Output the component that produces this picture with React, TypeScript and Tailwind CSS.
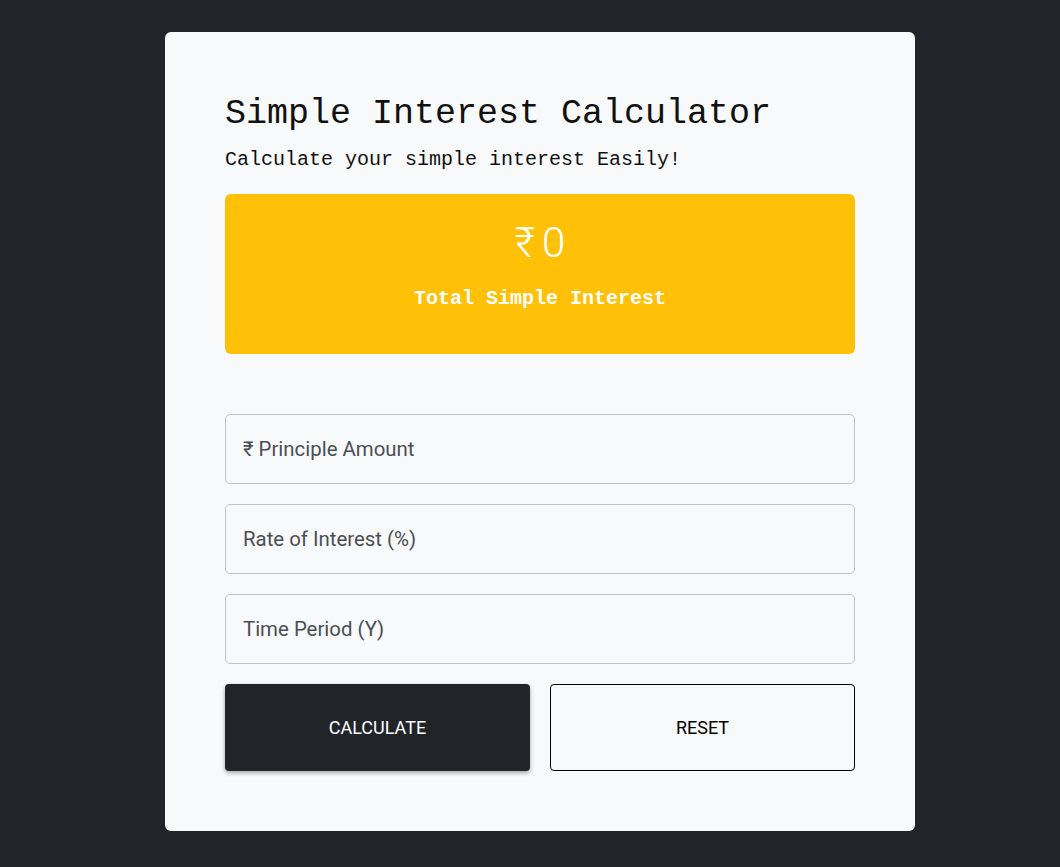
import React from "react";

export default function App() {
  return (
    <div className="min-h-[867px] w-full bg-[#212529] flex justify-center pt-[32px] pl-[20px]" style={{ fontFamily: "Roboto, 'Noto Sans', sans-serif" }}>
      <div className="w-[750px] h-[799px] bg-[#f8f9fa] rounded-[6px] px-[60px] pt-[62px]">
        <h1 className="text-[35px] leading-[40px] text-[#111] " style={{ fontFamily: "'Liberation Mono', 'Courier New', monospace" }}>
          Simple Interest Calculator
        </h1>
        <p className="text-[20px] leading-[24px] text-[#111] mt-[14px]" style={{ fontFamily: "'Liberation Mono', 'Courier New', monospace" }}>
          Calculate your simple interest Easily!
        </p>
        <div className="mt-[22px] h-[160px] bg-[#ffc107] rounded-[6px] flex flex-col items-center pt-[25px]">
          <div className="text-[42px] leading-[48px] font-light tracking-[7px] pl-[7px] text-white">₹0</div>
          <div className="mt-[20px] text-[20px] leading-[24px] font-bold text-white" style={{ fontFamily: "'Liberation Mono', 'Courier New', monospace" }}>
            Total Simple Interest
          </div>
        </div>
        <div className="mt-[60px] flex flex-col gap-[20px]">
          {["₹ Principle Amount", "Rate of Interest (%)", "Time Period (Y)"].map((p) => (
            <input
              key={p}
              placeholder={p}
              className="h-[70px] w-full border border-[#bfc3c7] rounded-[5px] bg-[#f8f9fa] px-[17px] text-[20.4px] placeholder:text-[#4a4f54] outline-none"
            />
          ))}
        </div>
        <div className="mt-[20px] grid grid-cols-2 gap-[20px]">
          <button className="h-[87px] bg-[#212529] text-white rounded-[4px] text-[18px] uppercase shadow-[0_2px_4px_rgba(0,0,0,0.35)]">
            Calculate
          </button>
          <button className="h-[87px] border border-black text-black rounded-[4px] text-[18px] uppercase">
            Reset
          </button>
        </div>
      </div>
    </div>
  );
}
